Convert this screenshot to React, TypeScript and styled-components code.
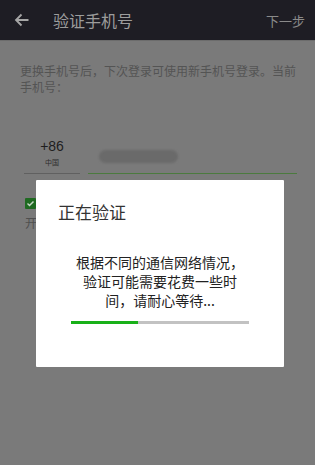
import * as React from "react";
import styled, { createGlobalStyle } from "styled-components";

const GlobalStyle = createGlobalStyle`
  html, body {
    margin: 0;
    padding: 0;
    background: #7a7a7a;
    font-family: "Noto Sans CJK SC", "Noto Sans", sans-serif;
  }
`;

const Page = styled.div`
  position: relative;
  width: 315px;
  height: 465px;
  overflow: hidden;
  background: #7a7a7a;
`;

const Toolbar = styled.div`
  display: flex;
  align-items: center;
  height: 40px;
  padding: 0 10px 0 14px;
  background: #1e1d24;
  border-bottom: 1px solid #6c6c6c;
`;

const BackButton = styled.div`
  display: flex;
  width: 16px;
  height: 16px;
  margin-right: 23px;
`;

const Title = styled.div`
  flex: 1;
  font-size: 16px;
  color: #9c9c9c;
`;

const NextStep = styled.div`
  font-size: 13px;
  color: #8a8a8a;
`;

const Content = styled.div`
  padding: 22px 14px 0 20px;
`;

const Hint = styled.p`
  margin: 0;
  font-size: 12px;
  line-height: 16px;
  color: #545454;
`;

const PhoneRow = styled.div`
  display: flex;
  align-items: flex-end;
  gap: 8px;
  margin-top: 43px;
  padding-left: 4px;
  padding-right: 4px;
`;

const CountryCode = styled.div`
  display: flex;
  flex-direction: column;
  align-items: center;
  width: 56px;
  padding-bottom: 6px;
  border-bottom: 1px solid #606060;
`;

const Code = styled.span`
  font-family: "Liberation Sans", Arial, sans-serif;
  font-size: 14px;
  line-height: 16px;
  color: #1e1e1e;
`;

const CountryName = styled.span`
  font-size: 7px;
  line-height: 10px;
  margin-top: 3px;
  color: #2e2e2e;
`;

const NumberField = styled.div`
  flex: 1;
  height: 34px;
  display: flex;
  align-items: center;
  padding-left: 11px;
  border-bottom: 1px solid #4b7a3e;
`;

const Smudge = styled.span`
  display: block;
  width: 79px;
  height: 13px;
  border-radius: 7px;
  background: #6a6a6a;
  filter: blur(1px);
`;

const Agreement = styled.div`
  margin-top: 24px;
  padding-left: 5px;
`;

const CheckBox = styled.span`
  display: flex;
  align-items: center;
  justify-content: center;
  width: 11px;
  height: 11px;
  border-radius: 1px;
  background: #1f6a21;
`;

const AgreementText = styled.div`
  margin-top: 6px;
  font-size: 12px;
  line-height: 16px;
  color: #4f4f4f;
`;

const Dialog = styled.div`
  position: absolute;
  top: 180px;
  left: 36px;
  width: 248px;
  height: 187px;
  box-sizing: border-box;
  padding: 20px 22px 0;
  background: #ffffff;
  border-radius: 1px;
`;

const DialogTitle = styled.div`
  font-size: 17px;
  line-height: 24px;
  color: #333333;
`;

const DialogBody = styled.div`
  width: 178px;
  margin: 29px auto 0;
  text-align: center;
  font-size: 14px;
  line-height: 19px;
  color: #222222;
`;

const Progress = styled.div`
  width: 178px;
  height: 3px;
  margin: 11px auto 0;
  background: #c2c2c2;
`;

const ProgressFill = styled.div`
  height: 100%;
  background: #18b018;
`;

const App = () => {
  const progress = 67 / 178;

  return (
    <Page>
      <GlobalStyle />
      <Toolbar>
        <BackButton>
          <svg width="16" height="16" viewBox="0 0 16 16" fill="none">
            <path
              d="M14.5 8H2M7.5 2.5L2 8l5.5 5.5"
              stroke="#a6a6a6"
              strokeWidth="1.8"
            />
          </svg>
        </BackButton>
        <Title>验证手机号</Title>
        <NextStep>下一步</NextStep>
      </Toolbar>

      <Content>
        <Hint>更换手机号后，下次登录可使用新手机号登录。当前手机号：</Hint>

        <PhoneRow>
          <CountryCode>
            <Code>+86</Code>
            <CountryName>中国</CountryName>
          </CountryCode>
          <NumberField>
            <Smudge />
          </NumberField>
        </PhoneRow>

        <Agreement>
          <CheckBox>
            <svg width="9" height="9" viewBox="0 0 9 9" fill="none">
              <path d="M1.5 4.6l2 2 4-4.2" stroke="#c8d8c8" strokeWidth="1.4" />
            </svg>
          </CheckBox>
          <AgreementText>开启通讯录匹配</AgreementText>
        </Agreement>
      </Content>

      <Dialog>
        <DialogTitle>正在验证</DialogTitle>
        <DialogBody>根据不同的通信网络情况，验证可能需要花费一些时间，请耐心等待...</DialogBody>
        <Progress>
          <ProgressFill style={{ width: `${progress * 100}%` }} />
        </Progress>
      </Dialog>
    </Page>
  );
};

export default App;
